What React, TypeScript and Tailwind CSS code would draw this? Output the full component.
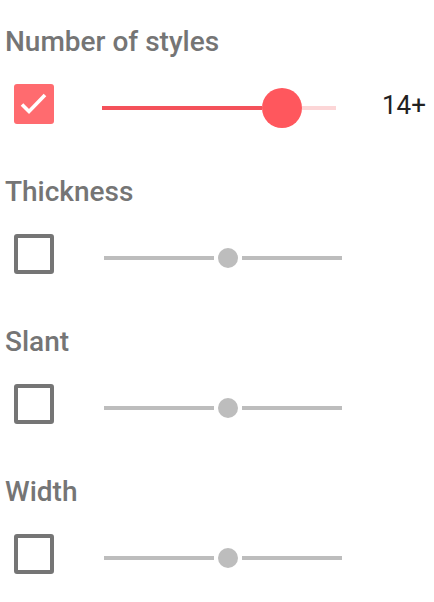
import React from 'react'

interface Section {
  label: string
  checked: boolean
}

const sections: Section[] = [
  { label: 'Number of styles', checked: true },
  { label: 'Thickness', checked: false },
  { label: 'Slant', checked: false },
  { label: 'Width', checked: false },
]

function Checkbox({ checked }: { checked: boolean }) {
  if (checked) {
    return (
      <div className="w-[40px] h-[40px] rounded-[3px] bg-[#ff6b6f] shrink-0">
        <svg width="40" height="40" viewBox="0 0 40 40">
          <polyline points="8,20.5 15,27.5 31,11" fill="none" stroke="#ffffff" strokeWidth="3.6" />
        </svg>
      </div>
    )
  }
  return <div className="w-[40px] h-[40px] rounded-[3px] border-[4px] border-[#757575] shrink-0" />
}

function ActiveSlider() {
  return (
    <div className="ml-[48px] mt-[8px] h-[40px] flex items-center">
      <div className="w-[160px] h-[4px] bg-[#f4515a]" />
      <div className="w-[40px] h-[40px] rounded-full bg-[#ff575d]" />
      <div className="w-[34px] h-[4px] bg-[#fcd6d7]" />
    </div>
  )
}

function IdleSlider() {
  return (
    <div className="ml-[50px] mt-[8px] h-[40px] flex items-center">
      <div className="w-[110px] h-[4px] bg-[#bdbdbd]" />
      <div className="ml-[4px] w-[20px] h-[20px] rounded-full bg-[#bdbdbd]" />
      <div className="ml-[4px] w-[100px] h-[4px] bg-[#bdbdbd]" />
    </div>
  )
}

export default function App() {
  return (
    <div className="w-[434px] h-[602px] bg-white font-['Roboto',sans-serif] overflow-hidden">
      {sections.map((s) => (
        <div key={s.label} className="h-[150px] pt-[26px] flex flex-col">
          <div className="pl-[5px] text-[28px] leading-[32px] font-medium text-[#757575]">{s.label}</div>
          <div className="mt-[26px] h-[40px] pl-[14px] flex items-center">
            <Checkbox checked={s.checked} />
            {s.checked ? <ActiveSlider /> : <IdleSlider />}
            {s.checked && (
              <span className="ml-[46px] mt-[2px] text-[26px] leading-[32px] text-[#212121]">14+</span>
            )}
          </div>
        </div>
      ))}
    </div>
  )
}
